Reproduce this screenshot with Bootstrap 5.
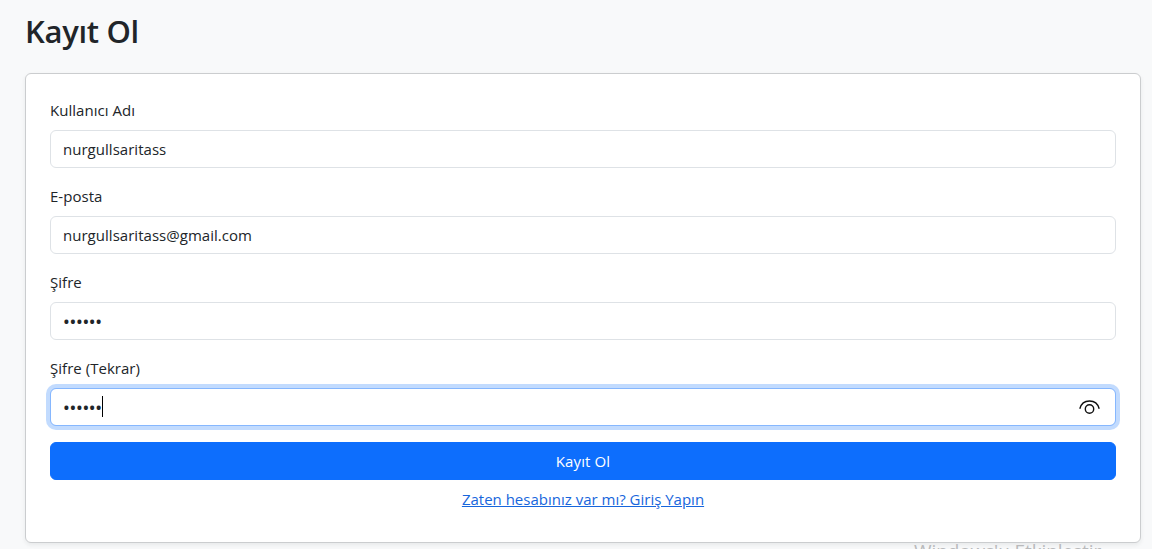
<!DOCTYPE html>
<html lang="tr">
<head>
<meta charset="utf-8">
<meta name="viewport" content="width=device-width, initial-scale=1">
<title>Kayıt Ol</title>
<link rel="stylesheet" href="https://cdn.jsdelivr.net/npm/bootstrap@5.3.0/dist/css/bootstrap.min.css">
<style>
body{font-family:"Segoe UI","Open Sans","Noto Sans",sans-serif;background:#f8f9fa;height:549px;overflow:hidden}
.page{padding:12px 11px 0 25px}
.page h2{font-size:31px;line-height:38px;font-weight:600;margin-bottom:23px;letter-spacing:-.3px}
.signup{height:470px;border-color:#cbcdcf}
.signup .form-label,.signup .form-control,.signup .btn,.signup a{font-size:15px;line-height:24px;letter-spacing:.03px}
.signup .form-label{display:block}
.signup .form-control{height:38px}
.signup .btn{letter-spacing:.1px}
.login-link{margin-top:7px}
.signup a{color:#1766dc;letter-spacing:0}
.signup .dots{font-family:"Noto Sans",sans-serif;font-size:18px;letter-spacing:-.3px}
.focused{border-color:#86b7fe;box-shadow:0 0 0 4px rgba(13,110,253,.25)}
.caret{width:1px;height:21px;background:#000;margin-top:-1px}
.eye{margin-right:2px;margin-top:1px}
.watermark{position:absolute;left:914px;top:538px;font-size:19px;line-height:26px;letter-spacing:-.1px;color:#b9babc;white-space:nowrap}
</style>
</head>
<body>
<main class="page">
<h2>Kayıt Ol</h2>
<div class="card shadow-sm signup">
<form class="card-body p-4">
<div class="mb-3"><label class="form-label mb-2" for="user">Kullanıcı Adı</label><input id="user" class="form-control" value="nurgullsaritass"></div>
<div class="mb-3"><label class="form-label mb-2" for="mail">E-posta</label><input id="mail" class="form-control" value="nurgullsaritass@gmail.com"></div>
<div class="mb-3"><div class="form-label mb-2">Şifre</div><div class="form-control d-flex align-items-center"><span class="dots">••••••</span></div></div>
<div class="mb-3"><div class="form-label mb-2">Şifre (Tekrar)</div><div class="form-control focused d-flex align-items-center"><span class="dots">••••••</span><span class="caret"></span>
<svg class="eye ms-auto" width="22" height="16" viewBox="0 0 22 16" fill="none" stroke="#111" stroke-width="1.4"><path d="M.8 8.700C2.100 3.800 6 1 10.500 1s8.400 2.800 9.700 7.700"/><circle cx="10.500" cy="9" r="4.200"/></svg></div></div>
<button type="button" class="btn btn-primary w-100 d-block">Kayıt Ol</button>
<div class="text-center login-link"><a href="#">Zaten hesabınız var mı? Giriş Yapın</a></div>
</form>
</div>
</main>
<div class="watermark">Windows'u Etkinleştir</div>
<script src="https://cdn.jsdelivr.net/npm/bootstrap@5.3.0/dist/js/bootstrap.bundle.min.js"></script>
</body>
</html>
